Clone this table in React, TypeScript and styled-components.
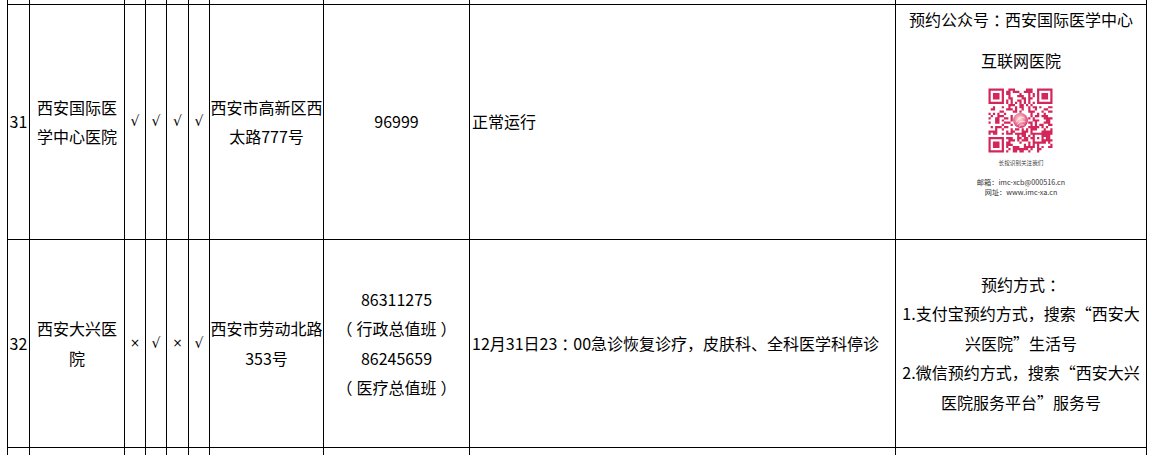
import React from 'react'
import styled, { createGlobalStyle } from 'styled-components'

const GlobalStyle = createGlobalStyle`
  html, body {
    margin: 0;
    padding: 0;
    background: #fff;
  }
  body {
    font-family: "Noto Sans CJK SC", "Microsoft YaHei", sans-serif;
    font-size: 16px;
    color: #000;
    text-spacing-trim: space-all;
  }
`;

const Page = styled.div`
  height: 455px;
  overflow: hidden;
  padding-left: 7px;
`;

const Sheet = styled.div`
  display: grid;
  grid-template-columns: 23px 95px 21px 21px 22px 21px 114px 146px 426px 251px;
  grid-template-rows: 5px 235px 208px 50px;
  width: 1140px;
`;

const Cell = styled.div<{ $first?: boolean; $align?: 'left' | 'center'; $top?: boolean }>`
  box-sizing: border-box;
  border-right: 1px solid #000;
  border-bottom: 1px solid #000;
  border-left: ${p => (p.$first ? '1px solid #000' : 'none')};
  display: flex;
  flex-direction: column;
  justify-content: ${p => (p.$top ? 'flex-start' : 'center')};
  align-items: ${p => (p.$align === 'left' ? 'flex-start' : 'center')};
  text-align: ${p => (p.$align === 'left' ? 'left' : 'center')};
  padding-left: ${p => (p.$align === 'left' ? '2px' : '0')};
  line-height: 29.5px;
  white-space: nowrap;
  overflow: visible;
`;

const Mark = styled.span<{ $cross?: boolean }>`
  font-family: "DejaVu Sans", sans-serif;
  font-size: ${p => (p.$cross ? '12px' : '14px')};
`;

// full-width punctuation drawn centred in its em box, as the source font does
const Punct = styled.span`
  display: inline-block;
  width: 1em;
  text-align: center;
  font-feature-settings: "halt";
`;

const Line = styled.div``;

const Title = styled.div<{ $gap?: number }>`
  margin-top: ${p => p.$gap || 0}px;
`;

const QrBox = styled.div`
  margin-top: 9px;
  width: 90px;
  height: 114px;
  line-height: normal;
`;

const fw = (text: string) =>
  text.split(/([（）：])/).map((part, i) =>
    /^[（）：]$/.test(part) ? <Punct key={i}>{part}</Punct> : part
  );

const N = 29;

function buildModules(): boolean[][] {
  let seed = 777516;
  const rand = () => {
    seed = (seed * 1103515245 + 12345) & 0x7fffffff;
    return seed / 0x7fffffff;
  };
  const m: boolean[][] = [];
  for (let r = 0; r < N; r++) {
    m.push([]);
    for (let c = 0; c < N; c++) m[r].push(rand() > 0.52);
  }
  // timing lines
  for (let i = 0; i < N; i++) {
    m[6][i] = i % 2 === 0;
    m[i][6] = i % 2 === 0;
  }
  const finder = (r0: number, c0: number) => {
    for (let r = -1; r <= 7; r++) {
      for (let c = -1; c <= 7; c++) {
        const rr = r0 + r, cc = c0 + c;
        if (rr < 0 || cc < 0 || rr >= N || cc >= N) continue;
        const ring = r === 0 || r === 6 || c === 0 || c === 6;
        const core = r >= 2 && r <= 4 && c >= 2 && c <= 4;
        const inside = r >= 0 && r <= 6 && c >= 0 && c <= 6;
        m[rr][cc] = inside && (ring || core);
      }
    }
  };
  finder(0, 0);
  finder(0, N - 7);
  finder(N - 7, 0);
  // alignment pattern
  for (let r = -2; r <= 2; r++) {
    for (let c = -2; c <= 2; c++) {
      m[22 + r][22 + c] = Math.max(Math.abs(r), Math.abs(c)) !== 1;
    }
  }
  // logo hole
  for (let r = 11; r <= 17; r++) for (let c = 11; c <= 17; c++) m[r][c] = false;
  return m;
}

const modulePath = (() => {
  const m = buildModules();
  let d = '';
  m.forEach((row, r) =>
    row.forEach((on, c) => {
      if (on) d += `M${c} ${r}h1v1h-1z`;
    })
  );
  return d;
})();

function QrCode() {
  return (
    <QrBox>
      <svg width="90" height="114" viewBox="0 0 90 114">
        <defs>
          <radialGradient id="orb" cx="45%" cy="40%" r="60%">
            <stop offset="0%" stopColor="#fde6c8" />
            <stop offset="45%" stopColor="#f29bb0" />
            <stop offset="100%" stopColor="#d6336c" />
          </radialGradient>
        </defs>
        <rect width="90" height="114" fill="#fff" />
        <g transform={`translate(12.5 3.5) scale(${64 / N})`}>
          <path d={modulePath} fill="#d3275b" />
        </g>
        <circle cx="44.5" cy="35.5" r="7.5" fill="url(#orb)" />
        <path
          d="M40.5 37c1.5-4 5-6 8-4M41.5 39.5c2-3 5-4 7.5-2.5M43 41.5c1.6-1.8 3.6-2.2 5.4-1.2"
          stroke="#fff"
          strokeWidth="0.8"
          fill="none"
          opacity="0.85"
        />
        <text x="45" y="80" fontSize="5.6" textAnchor="middle" fill="#444" fontFamily="Noto Sans CJK SC, sans-serif">
          长按识别关注我们
        </text>
        <text x="45" y="99.5" fontSize="7.2" textAnchor="middle" fill="#333" fontFamily="Noto Sans CJK SC, sans-serif">
          邮箱：imc-xcb@000516.cn
        </text>
        <text x="45" y="109.5" fontSize="7.2" textAnchor="middle" fill="#333" fontFamily="Noto Sans CJK SC, sans-serif">
          网址：www.imc-xa.cn
        </text>
      </svg>
    </QrBox>
  );
}

type Row = {
  no: string;
  name: string[];
  marks: string[];
  address: string[];
  phone: string[];
  status: string;
  booking: React.ReactNode;
  bookingTop?: boolean;
};

const rows: Row[] = [
  {
    no: '31',
    name: ['西安国际医', '学中心医院'],
    marks: ['√', '√', '√', '√'],
    address: ['西安市高新区西', '太路777号'],
    phone: ['96999'],
    status: '正常运行',
    bookingTop: true,
    booking: (
      <>
        <Title>{fw('预约公众号：西安国际医学中心')}</Title>
        <Title $gap={11.5}>互联网医院</Title>
        <QrCode />
      </>
    ),
  },
  {
    no: '32',
    name: ['西安大兴医', '院'],
    marks: ['×', '√', '×', '√'],
    address: ['西安市劳动北路', '353号'],
    phone: ['86311275', '（行政总值班）', '86245659', '（医疗总值班）'],
    status: '12月31日23：00急诊恢复诊疗，皮肤科、全科医学科停诊',
    booking: (
      <>
        <Line>{fw('预约方式：')}</Line>
        <Line>1.支付宝预约方式，搜索“西安大</Line>
        <Line>兴医院”生活号</Line>
        <Line>2.微信预约方式，搜索“西安大兴</Line>
        <Line>医院服务平台”服务号</Line>
      </>
    ),
  },
];

const emptyRow = (key: string) =>
  Array.from({ length: 10 }, (_, i) => <Cell key={`${key}-${i}`} $first={i === 0} />);

export default function App() {
  return (
    <Page>
      <GlobalStyle />
      <Sheet>
        {emptyRow('top')}
        {rows.map(row => (
          <React.Fragment key={row.no}>
            <Cell $first>{row.no}</Cell>
            <Cell>
              {row.name.map(t => (
                <Line key={t}>{t}</Line>
              ))}
            </Cell>
            {row.marks.map((mk, i) => (
              <Cell key={i}>
                <Mark $cross={mk === '×'}>{mk}</Mark>
              </Cell>
            ))}
            <Cell>
              {row.address.map(t => (
                <Line key={t}>{t}</Line>
              ))}
            </Cell>
            <Cell>
              {row.phone.map(t => (
                <Line key={t}>{fw(t)}</Line>
              ))}
            </Cell>
            <Cell $align="left">
              <Line>{fw(row.status)}</Line>
            </Cell>
            <Cell $top={row.bookingTop}>{row.booking}</Cell>
          </React.Fragment>
        ))}
        {emptyRow('next')}
      </Sheet>
    </Page>
  );
}
